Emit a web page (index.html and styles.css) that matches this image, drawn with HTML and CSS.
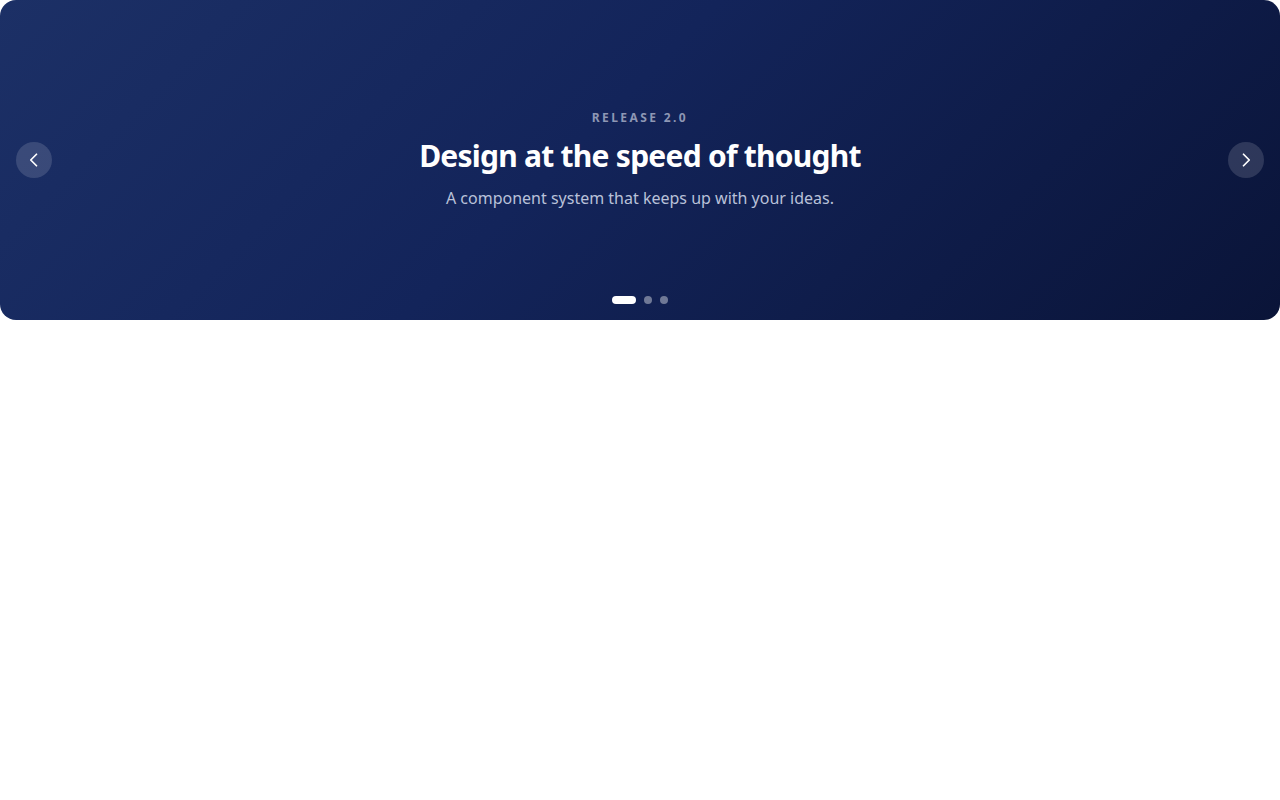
FILE: index.html
```html
<!DOCTYPE html>
<html lang="en">
<head>
<meta charset="utf-8">
<title>Carousel</title>
<link rel="stylesheet" href="styles.css">
</head>
<body>
<section class="carousel">
  <button class="nav nav-prev" aria-label="Previous">
    <svg width="16" height="16" viewBox="0 0 16 16" fill="none" stroke="#fff" stroke-width="1.75" stroke-linecap="round" stroke-linejoin="round"><path d="M10.5 2.25 4.75 8 10.5 13.75"/></svg>
  </button>
  <div class="slide">
    <div class="eyebrow">RELEASE 2.0</div>
    <h1 class="title">Design at the speed of thought</h1>
    <p class="subtitle">A component system that keeps up with your ideas.</p>
  </div>
  <button class="nav nav-next" aria-label="Next">
    <svg width="16" height="16" viewBox="0 0 16 16" fill="none" stroke="#fff" stroke-width="1.75" stroke-linecap="round" stroke-linejoin="round"><path d="M5.5 2.25 11.25 8 5.5 13.75"/></svg>
  </button>
  <div class="dots">
    <span class="dot active"></span>
    <span class="dot"></span>
    <span class="dot"></span>
  </div>
</section>
</body>
</html>
```
FILE: styles.css
```css
* { box-sizing: border-box; }
html, body { margin: 0; padding: 0; background: #fff; }
body { font-family: "Noto Sans", "Open Sans", sans-serif; }

.carousel {
  position: relative;
  width: 1280px;
  height: 320px;
  border-radius: 16px;
  overflow: hidden;
  background: linear-gradient(135deg, #1c3066 0%, #13245a 45%, #0a1438 100%);
  display: flex;
  align-items: center;
  justify-content: center;
}

.slide {
  display: flex;
  flex-direction: column;
  align-items: center;
  text-align: center;
}

.eyebrow {
  font-size: 12px;
  line-height: 16px;
  font-weight: 700;
  letter-spacing: 2.4px;
  color: #8e97b4;
  margin-bottom: 12px;
}

.title {
  margin: 0 0 12px;
  font-size: 30px;
  line-height: 36px;
  font-weight: 700;
  color: #fff;
  letter-spacing: -0.75px;
}

.subtitle {
  margin: 0;
  font-size: 16px;
  line-height: 24px;
  color: #b9c1d9;
}

.nav {
  position: absolute;
  top: 142px;
  width: 36px;
  height: 36px;
  border: 0;
  padding: 0;
  border-radius: 50%;
  background: rgba(255, 255, 255, 0.14);
  display: flex;
  align-items: center;
  justify-content: center;
  cursor: pointer;
}
.nav-prev { left: 16px; }
.nav-next { right: 16px; }

.dots {
  position: absolute;
  left: 0;
  right: 0;
  bottom: 16px;
  display: flex;
  justify-content: center;
  gap: 8px;
}
.dot {
  width: 8px;
  height: 8px;
  border-radius: 4px;
  background: rgba(255, 255, 255, 0.4);
}
.dot.active {
  width: 24px;
  background: #fff;
}
```
